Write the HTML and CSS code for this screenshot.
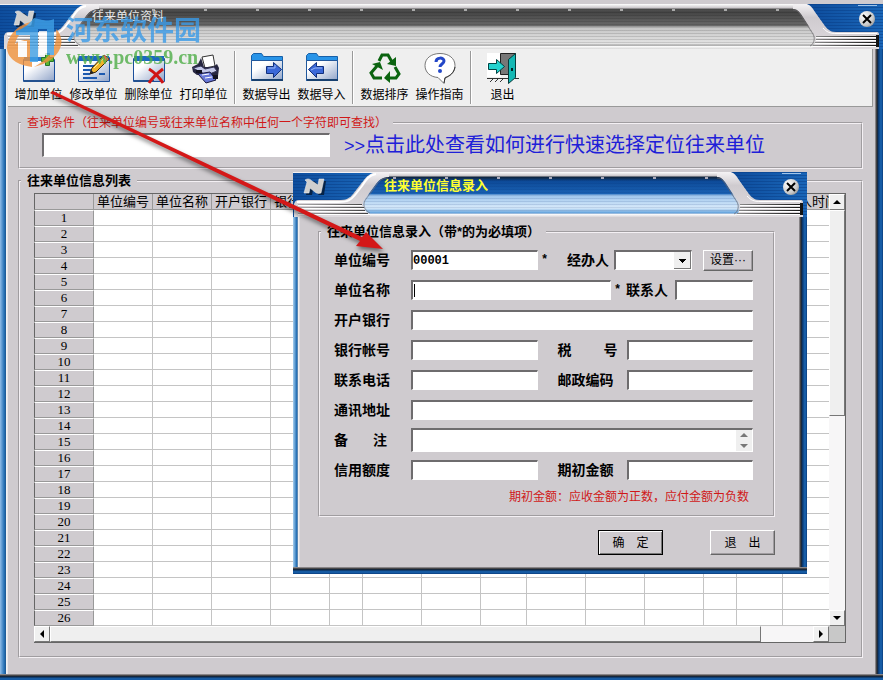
FILE: index.html
```html
<!DOCTYPE html>
<html lang="zh-CN">
<head>
  <meta charset="UTF-8" />
  <meta name="viewport" content="width=device-width, initial-scale=1.0"/>
  <title>往来单位资料</title>
  <link rel="stylesheet" href="styles.css">
</head>
<body>
  <svg class="defs" width="0" height="0" aria-hidden="true">
    <defs>
      <linearGradient id="blueFill" x1="0" y1="0" x2="1" y2="0">
        <stop offset="0" stop-color="#0d4c9c"/>
        <stop offset="1" stop-color="#1a66b8"/>
      </linearGradient>
      <linearGradient id="silverFill" x1="0" y1="0" x2="0" y2="1">
        <stop offset="0" stop-color="#f4f2f4"/>
        <stop offset="0.3" stop-color="#cfcbcf"/>
        <stop offset="1" stop-color="#dedade"/>
      </linearGradient>
      <linearGradient id="stripeLeft" gradientUnits="userSpaceOnUse" x1="0" y1="0" x2="72" y2="0">
        <stop offset="0" stop-color="#b8b6b8"/>
        <stop offset="1" stop-color="#444"/>
      </linearGradient>
      <linearGradient id="stripeRight" gradientUnits="userSpaceOnUse" x1="22" y1="0" x2="86" y2="0">
        <stop offset="0" stop-color="#888"/>
        <stop offset="1" stop-color="#111"/>
      </linearGradient>
      <linearGradient id="folderFill" x1="0" y1="0" x2="1" y2="1">
        <stop offset="0.3" stop-color="#ffffff"/>
        <stop offset="1" stop-color="#8fa3c8"/>
      </linearGradient>
      <pattern id="lines" width="4" height="3" patternUnits="userSpaceOnUse">
        <rect width="4" height="1" fill="#063a80" opacity="0.45"/>
      </pattern>
      <symbol id="capLeft" overflow="visible">
        <path fill="url(#silverFill)" d="M-5 0H96V5C90 5 87 7 83 12L72 27C68 32 70 38 77 42V45H-5Z"/>
        <path fill="none" stroke="#77757a" stroke-width="1" opacity="0.7" d="M95 6C90 6 87 8 84 12L73 27C69 32 71 38 77 41"/>
        <path fill="url(#blueFill)" d="M-5 1H80C74 3 72 7 67 13L60 22C56 27 53 28 44 28H6C3 28 2 29 1 32V45H-5Z"/>
        <path fill="url(#lines)" d="M-5 1H80C74 3 72 7 67 13L60 22C56 27 53 28 44 28H6C3 28 2 29 1 32V45H-5Z"/>
        <path fill="none" stroke="#fff" stroke-width="2" d="M4 30H45C55 30 58 28 62 23L69 14C73 8 76 3 83 2"/>
        <g stroke="#fff"><path d="M5 33.500H69M5 36.500H71M5 39.500H73M5 42.500H77"/></g>
        <g fill="url(#stripeLeft)">
          <rect x="5" y="32" width="64" height="1"/><rect x="5" y="35" width="66" height="1"/>
          <rect x="5" y="38" width="67" height="1"/><rect x="5" y="41" width="70" height="1"/>
        </g>
        <path fill="#062347" d="M15 9h6l6 5 1-5h5l-2 14h-5l-6-5-1 5h-6l2-10z"/>
        <path fill="#cfcfcf" stroke="#f4f4f4" stroke-width="0.500" d="M12 8c3-2 5-1 7 1l6 4 1-6h5l-3 14c-3 1-5 0-6-1l-5-4-1 5h-5l3-11z"/>
      </symbol>
      <symbol id="capRight" overflow="visible">
        <path fill="url(#silverFill)" d="M0 0H90V45H18C22 42 24 34 21 30L8 10C5 6 3 5 0 5Z"/>
        <path fill="none" stroke="#66646a" stroke-width="1" opacity="0.7" d="M0 6C3 6 5 7 7 10L20 30C23 35 20 41 17 42"/>
        <path fill="url(#blueFill)" d="M14 0H90V45H86V31C86 28 85 28 83 28H46C38 28 36 27 32 22L22 8C19 3 17 1 14 0Z"/>
        <path fill="url(#lines)" d="M14 0H90V45H86V31C86 28 85 28 83 28H46C38 28 36 27 32 22L22 8C19 3 17 1 14 0Z"/>
        <path stroke="#9fc4ea" d="M65 1.500H84"/>
        <path fill="none" stroke="#fff" stroke-width="1" d="M30 24C34 28 36 29.500 44 29.500H84"/>
        <path stroke="#fff" d="M23 33.500H85M23 36.500H85M22 39.500H85M20 42.500H85"/>
        <g fill="url(#stripeRight)">
          <rect x="23" y="32" width="62" height="1"/><rect x="23" y="35" width="62" height="1"/>
          <rect x="22" y="38" width="63" height="1"/><rect x="20" y="41" width="65" height="1"/>
          <rect x="83" y="31" width="3" height="12"/>
        </g>
      </symbol>
    </defs>
  </svg>

  <main class="window">
    <header class="titlebar titlebar-gray">
      <svg class="cap" width="99" height="45" viewBox="-3 0 99 45"><use href="#capLeft"/></svg>
      <h1 class="title">往来单位资料</h1>
      <svg class="cap" width="90" height="45" viewBox="0 0 90 45"><use href="#capRight"/></svg>
      <button class="close" aria-label="关闭"><svg width="16" height="16" viewBox="0 0 16 16"><path d="M4 4l8 8M12 4l-8 8" stroke="#000" stroke-width="2"/></svg></button>
    </header>

    <nav class="toolbar">
      <button class="tool">
        <svg width="32" height="32" viewBox="0 0 32 32">
          <path fill="url(#folderFill)" stroke="#1b4f9c" d="M.5 6.500h31v22h-31z"/><path fill="#2a7ad0" d="M1 4h18v4H1z"/><path fill="#23518f" d="M1 27h31v2H1z"/>
          <path fill="#5cb531" stroke="#24752a" d="M22.500.5h4v4h4v4h-4v4h-4v-4h-4v-4h4z"/>
        </svg>
        <span>增加单位</span>
      </button>
      <button class="tool">
        <svg width="32" height="32" viewBox="0 0 32 32">
          <path fill="url(#folderFill)" stroke="#1b4f9c" d="M.5 4.500h31v24h-31z"/><path fill="#1c68c4" d="M1 3h30v5H1z"/>
          <path stroke="#1d5ab0" stroke-width="2" d="M5 13h12M5 17h9M5 21h7M5 25h14M21 21h6"/>
          <path fill="#f0b429" stroke="#3c2708" d="M12 21l2-6L26 2l5 4-13 13z"/><path fill="#222" d="M12 21l1-4 3 3z"/><path fill="#e06c4c" d="M26 2l5 4-2 2-5-4z"/><path stroke="#fff1a0" d="M16 15L26 5"/>
        </svg>
        <span>修改单位</span>
      </button>
      <button class="tool">
        <svg width="32" height="32" viewBox="0 0 32 32">
          <path fill="url(#folderFill)" stroke="#1b4f9c" d="M.5 5.500h31v23h-31z"/><path fill="#1c68c4" d="M1 3h30v5H1z"/><path fill="#23518f" d="M1 27h20v2H1z"/>
          <path stroke="#d01414" stroke-width="3" fill="none" d="M16 16c5 3 10 8 14 14M30 16c-4 3-10 8-14 14"/>
        </svg>
        <span>删除单位</span>
      </button>
      <button class="tool">
        <svg width="32" height="32" viewBox="0 0 32 32">
          <path fill="#fff" stroke="#333" d="M14 4l11-2 2 11-10 2z"/>
          <path fill="#262640" d="M4 14l6-3 3-6 3 9h9l4-3 2 4-1 8-5 3-8-5-8 1-4-3z"/>
          <path fill="#c3c8e8" stroke="#333355" d="M5 15l8-2 4 3 9-2 3 4-10 4-7-3z"/>
          <path fill="#6878d8" stroke="#171740" d="M10 21l12-2 6 8-10 3z"/>
          <path stroke="#fff" d="M14 22l7-1M17 25l7-1"/><path fill="#11111f" d="M8 17h6v3H8zM25 22h5v4h-5z"/>
        </svg>
        <span>打印单位</span>
      </button>
      <span class="separator"></span>
      <button class="tool">
        <svg width="32" height="32" viewBox="0 0 32 32">
          <path fill="#2894e8" stroke="#1760a8" d="M.5 28V2.500l2-2h8l2 3h19V9H.5z"/><path fill="url(#folderFill)" stroke="#21589c" d="M.5 7.500h31v20H.5z"/><path fill="#17406f" d="M1 26h31v2H1z"/>
          <path fill="#3b68d8" stroke="#102f7c" d="M15.500 13.500h7v-4l8 7-8 8v-4h-7z"/><path stroke="#9db9f4" fill="none" d="M17 15h7v-3"/>
        </svg>
        <span>数据导出</span>
      </button>
      <button class="tool">
        <svg width="32" height="32" viewBox="0 0 32 32">
          <path fill="#2894e8" stroke="#1760a8" d="M.5 28V2.500l2-2h8l2 3h19V9H.5z"/><path fill="url(#folderFill)" stroke="#21589c" d="M.5 7.500h31v20H.5z"/><path fill="#17406f" d="M1 26h31v2H1z"/>
          <path fill="#3b68d8" stroke="#102f7c" d="M17.500 13.500h-7v-4l-8 7 8 8v-4h7z"/><path stroke="#9db9f4" fill="none" d="M16 15H9l-4 2"/>
        </svg>
        <span>数据导入</span>
      </button>
      <span class="separator"></span>
      <button class="tool">
        <svg width="32" height="32" viewBox="0 0 32 32">
          <g fill="none" stroke="#0b6410" stroke-width="3">
            <path d="M10 8l3-6h6l4 7"/>
            <path d="M8 13L2 20l3 5h8"/>
            <path d="M26 14l4 7-3 4h-7"/>
          </g>
          <g fill="#0b6410">
            <path d="M27 4v9l-9-2z"/>
            <path d="M3 11l8-2 3 8z"/>
            <path d="M21 18v12l-6-5z"/>
          </g>
        </svg>
        <span>数据排序</span>
      </button>
      <button class="tool">
        <svg width="32" height="32" viewBox="0 0 32 32">
          <path fill="#fff" stroke="#777" d="M16 .5c9 0 15 5 15 12 0 6-4 10-10 12l-1 6-6-6C6 24 1 19 1 12.500 1 5.500 7 .5 16 .5z"/>
          <path stroke="#333" fill="none" d="M31 14c-1 6-5 9-10 11l-1 5"/>
          <path fill="none" stroke="#2347c8" stroke-width="3" d="M12 9c0-5 8-5 8-1 0 3-4 3-4 6"/><circle cx="16" cy="18" r="2" fill="#2347c8"/>
        </svg>
        <span>操作指南</span>
      </button>
      <span class="separator"></span>
      <button class="tool">
        <svg width="32" height="32" viewBox="0 0 32 32">
          <path fill="#fff" d="M0 0h14v24H0z"/><path fill="#777" stroke="#222" d="M13.500.5h15v21h-15z"/>
          <path fill="#14b8b4" stroke="#063c3c" d="M21.500 6.500l7-6v24l-7 6z"/><path fill="#022" d="M24 15h2v3h-2z"/>
          <path fill="#24d4d0" stroke="#044" d="M1.500 10.500h8v-4l8 7-8 7v-4h-8z"/>
          <path stroke="#333" d="M0 25.500h21M28 25.500h4M3 29l3-3M8 29l3-3M13 29l3-3"/>
        </svg>
        <span>退出</span>
      </button>
    </nav>

    <fieldset class="group query">
      <legend><label for="keyword">查询条件（往来单位编号或往来单位名称中任何一个字符即可查找）</label></legend>
      <div class="query-row">
        <input class="field keyword" id="keyword" type="text">
        <a class="help-link" href="#"><span>&gt;&gt;</span>点击此处查看如何进行快速选择定位往来单位</a>
      </div>
    </fieldset>

    <fieldset class="group list">
      <legend>往来单位信息列表</legend>
      <div class="grid">
        <div class="grid-view">
          <table>
            <colgroup>
              <col class="c-head"><col class="c-l"><col class="c-l"><col class="c-l"><col class="c-l"><col class="c-s"><col class="c-l"><col class="c-l">
              <col class="c-m"><col class="c-l"><col class="c-l"><col class="c-l"><col class="c-s"><col class="c-m"><col class="c-l">
            </colgroup>
            <thead>
              <tr><th></th><th>单位编号</th><th>单位名称</th><th>开户银行</th><th>银行帐号</th><th></th><th></th><th></th><th></th><th></th><th></th><th></th><th></th><th></th><th>录入时间</th></tr>
            </thead>
            <tbody id="rows"></tbody>
          </table>
        </div>
        <div class="scroll scroll-v">
          <button class="scroll-btn" aria-label="向上"><i class="tri up"></i></button>
          <div class="thumb"></div>
          <div class="track"></div>
          <button class="scroll-btn" aria-label="向下"><i class="tri down"></i></button>
        </div>
        <div class="scroll scroll-h">
          <button class="scroll-btn" aria-label="向左"><i class="tri left"></i></button>
          <div class="thumb"></div>
          <div class="track"></div>
          <button class="scroll-btn" aria-label="向右"><i class="tri right"></i></button>
        </div>
        <div class="corner"></div>
      </div>
    </fieldset>
  </main>

  <section class="dialog" role="dialog" aria-labelledby="dialogTitle">
    <header class="titlebar titlebar-blue">
      <svg class="cap" width="96" height="45" viewBox="0 0 96 45"><use href="#capLeft"/></svg>
      <h2 class="title" id="dialogTitle">往来单位信息录入</h2>
      <svg class="cap" width="90" height="45" viewBox="0 0 90 45"><use href="#capRight"/></svg>
      <button class="close" aria-label="关闭"><svg width="16" height="16" viewBox="0 0 16 16"><path d="M4 4l8 8M12 4l-8 8" stroke="#000" stroke-width="2"/></svg></button>
    </header>
    <form class="dialog-body">
      <fieldset class="group entry">
        <legend>往来单位信息录入（带*的为必填项）</legend>
        <div class="row">
          <label for="code">单位编号</label>
          <input class="field half" id="code" type="text" value="00001">
          <span class="star">*</span>
          <label class="agent-label" for="agent">经办人</label>
          <select class="field agent" id="agent"><option></option></select>
          <button class="btn btn-set" type="button">设置···</button>
        </div>
        <div class="row">
          <label for="name">单位名称</label>
          <span class="caret-box"><input class="field" id="name" type="text"></span>
          <span class="star">*</span>
          <label class="contact-label" for="contact">联系人</label>
          <input class="field contact" id="contact" type="text">
        </div>
        <div class="row">
          <label for="bank">开户银行</label>
          <input class="field wide" id="bank" type="text">
        </div>
        <div class="row">
          <label for="account">银行帐号</label>
          <input class="field half" id="account" type="text">
          <label class="second spread" for="tax"><span>税</span><span>号</span></label>
          <input class="field half" id="tax" type="text">
        </div>
        <div class="row">
          <label for="phone">联系电话</label>
          <input class="field half" id="phone" type="text">
          <label class="second" for="zip">邮政编码</label>
          <input class="field half" id="zip" type="text">
        </div>
        <div class="row">
          <label for="address">通讯地址</label>
          <input class="field wide" id="address" type="text">
        </div>
        <div class="row">
          <label class="spread" for="memo"><span>备</span><span>注</span></label>
          <div class="field memo">
            <textarea id="memo" rows="1"></textarea>
            <div class="memo-scroll"><i class="tri up"></i><i class="tri down"></i></div>
          </div>
        </div>
        <div class="row">
          <label for="credit">信用额度</label>
          <input class="field half" id="credit" type="text">
          <label class="second" for="opening">期初金额</label>
          <input class="field half" id="opening" type="text">
        </div>
        <p class="note">期初金额：应收金额为正数，应付金额为负数</p>
      </fieldset>
      <div class="actions">
        <button class="btn btn-main default" type="button"><span>确</span><span>定</span></button>
        <button class="btn btn-main" type="button"><span>退</span><span>出</span></button>
      </div>
    </form>
  </section>

  <div class="watermark">
    <svg width="60" height="52" viewBox="0 0 60 52">
      <path fill="#f0923c" d="M1 30C3 14 18 2 40 4C24 6 12 14 9 27C17 22 22 22 26 24V50C12 48 1 42 1 30z"/>
      <path fill="#f0923c" d="M50 12C62 24 54 44 28 50C42 42 52 32 50 12z"/>
      <path fill="#3fa0e6" d="M10 14C18 12 24 6 28 1C38 3 40 5 48 2V38H41V12H32V45H24V18H10z"/>
      <path fill="#fff" d="M12 24h9v16h-9zM33 14h8v24h-8z"/>
    </svg>
    <div class="watermark-text">
      <strong>河东软件园</strong>
      <em>www.pc0359.cn</em>
    </div>
  </div>

  <svg class="arrow" width="350" height="180" viewBox="0 0 350 180" aria-hidden="true">
    <path fill="#d41818" d="M10 4L13 2L322 148L326 143L343 160L316 157L320 152Z"/>
  </svg>

  <script>
    const tbody = document.getElementById("rows");
    const columns = 14;

    for (let i = 1; i <= 26; i++) {
      const row = document.createElement("tr");
      const head = document.createElement("th");
      head.textContent = i;
      row.appendChild(head);
      for (let c = 0; c < columns; c++) {
        row.appendChild(document.createElement("td"));
      }
      tbody.appendChild(row);
    }
  </script>
</body>
</html>
```
FILE: styles.css
```css
* {
  box-sizing: border-box;
}

body {
  margin: 0;
  position: relative;
  font-family: "Liberation Sans", "Noto Sans CJK SC", sans-serif;
  font-size: 12px;
  line-height: 16px;
  color: #000;
  background: #cfcbcf;
}

button, input, select, textarea {
  font: inherit;
  color: inherit;
}

.defs {
  position: absolute;
}

/* window frame */
.window {
  position: relative;
  min-height: 100vh;
  padding: 4px 0 0 0;
  display: flex;
  flex-direction: column;
  background:
    linear-gradient(#cfcbcf, #cfcbcf) top / 100% 4px no-repeat,
    linear-gradient(to bottom, #a8a4a8, #222 30%, #0a2a50 40%, #1a66b4 70%, #0b3d7c) bottom / 100% 7px no-repeat,
    linear-gradient(to right, #8fbce8, #2a74b8 50%, #1d5b98 70%, #f4f4f4 80%, #e4e0e4) left / 8px 100% no-repeat,
    linear-gradient(to right, #a8a4a8, #222 25%, #0a3468 40%, #1a66b4 75%, #0b3d7c) right / 8px 100% no-repeat,
    #cfcbcf;
}

.titlebar {
  position: relative;
  display: flex;
  justify-content: space-between;
  height: 45px;
}

.titlebar-gray {
  background:
    repeating-linear-gradient(to right, transparent 0 48px, #aaa 48px 51px, transparent 51px 52px) 0 5px / 100% 2px no-repeat,
    repeating-linear-gradient(to bottom, rgba(0, 0, 0, 0.12) 0 1px, transparent 1px 3px) 0 5px / 100% 37px no-repeat,
    linear-gradient(to bottom, #fff 0, #c8c4c8 4px, #555 5px, #444 8px, #6a6a6a 22px, #c4c4c4 23px, #e4e4e4 40px, #999 41px, #fff 42px, #d8d8d8 45px);
}

.titlebar-blue {
  background:
    repeating-linear-gradient(to right, transparent 0 48px, #aab 48px 51px, transparent 51px 52px) 0 5px / 100% 2px no-repeat,
    repeating-linear-gradient(to bottom, rgba(0, 40, 110, 0.12) 0 1px, transparent 1px 3px) 0 5px / 100% 37px no-repeat,
    linear-gradient(to bottom, #fff 0, #c8c4c8 4px, #123 5px, #0d4a98 9px, #1a62b4 22px, #9cc4ec 23px, #d8eafa 36px, #5fa0dc 41px, #fff 42px, #d8d4d8 45px);
}

.title {
  position: absolute;
  left: 92px;
  top: 5px;
  margin: 0;
  font-size: 12px;
  font-weight: normal;
  color: #e8e8e8;
}

.titlebar-blue .title {
  left: 91px;
  top: 6px;
  font-size: 13px;
  font-weight: bold;
  color: #ffff30;
}

.close {
  position: absolute;
  right: 8px;
  top: 7px;
  width: 16px;
  height: 16px;
  padding: 0;
  border: none;
  border-radius: 50%;
  background: radial-gradient(circle at 5px 5px, #fff, #c8c8c8 60%, #666);
}

.close svg {
  display: block;
}

/* toolbar */
.toolbar {
  display: flex;
  height: 58px;
  margin: 0 10px 0 8px;
  padding: 4px 3px 0;
  background: #efefef;
  border-right: 1px solid #999;
  border-bottom: 1px solid #999;
}

.tool {
  width: 55px;
  padding: 0;
  border: none;
  background: none;
  white-space: nowrap;
  display: flex;
  flex-direction: column;
  align-items: center;
}

.tool span {
  margin: 2px -2px 0;
}

.separator {
  width: 2px;
  margin: -2px 3px 2px;
  border-left: 1px solid #999;
  border-right: 1px solid #fff;
}

/* groups */
.group {
  min-width: 0;
  margin: 0;
  border: 2px groove #f4f0f4;
}

.group legend {
  padding: 0 6px;
  font-size: 13px;
  font-weight: bold;
}

.query {
  margin: 8px 20px 0 18px;
  padding: 2px 22px 10px;
}

.query legend {
  margin-left: -21px;
  font-size: 12px;
  font-weight: normal;
  color: #d01818;
}

.query-row {
  display: flex;
  align-items: center;
  gap: 14px;
  height: 24px;
}

.field {
  height: 20px;
  min-width: 0;
  padding: 0 2px;
  border: 1px solid;
  border-width: 2px 1px 1px 2px;
  border-color: #6e6c6e #fff #fff #6e6c6e;
  border-radius: 0;
  outline: none;
  background: #fff;
}

.keyword {
  width: 288px;
  height: 24px;
}

.help-link {
  font-size: 20px;
  line-height: 24px;
  color: #2020d8;
  text-decoration: none;
  white-space: nowrap;
}

.help-link span {
  font-size: 18px;
}

.list {
  flex: 1;
  margin: 4px 20px 23px 18px;
  padding: 4px 15px 13px 14px;
}

.list legend {
  margin-left: -13px;
}

.grid {
  display: grid;
  grid-template-columns: 1fr 16px;
  grid-template-rows: auto 16px;
  border: 1px solid #666;
  border-left: none;
}

.grid-view {
  overflow: hidden;
  background: #fff;
}

table {
  width: 808px;
  table-layout: fixed;
  border-collapse: separate;
  border-spacing: 0;
}

.c-head { width: 60px; }
.c-l { width: 59px; }
.c-m { width: 46px; }
.c-s { width: 33px; }

th, td {
  height: 16px;
  padding: 0;
  border-right: 1px solid #c4c4c4;
  border-bottom: 1px solid #c4c4c4;
}

th {
  overflow: hidden;
  font-size: 13px;
  line-height: 15px;
  font-weight: normal;
  white-space: nowrap;
  background: #cfcbcf;
  border-color: #999;
}

th:first-child {
  border-left: 1px solid #666;
}

tbody th {
  font-family: "Liberation Serif", serif;
  border-top: 1px solid #fff;
  line-height: 14px;
}

/* scroll bars */
.scroll {
  display: flex;
  background: #f7f6f7;
}

.scroll-v {
  flex-direction: column;
}

.scroll-btn {
  width: 16px;
  height: 16px;
  flex: none;
  display: flex;
  align-items: center;
  justify-content: center;
  padding: 0;
  background: #f0f0f0;
  border: 1px solid;
  border-color: #fff #777 #777 #fff;
}

.thumb {
  background: #efefef;
  border: 1px solid;
  border-color: #fff #777 #777 #fff;
}

.scroll-v .thumb {
  flex: 205;
}

.scroll-v .track {
  flex: 195;
}

.scroll-h .thumb {
  flex: 712;
}

.scroll-h .track {
  flex: 52;
}

.corner {
  background: #c8c8c8;
}

.tri {
  width: 0;
  height: 0;
  border: 4px solid transparent;
}

.up { border-top-width: 0; border-bottom-color: #000; }
.down { border-bottom-width: 0; border-top-color: #000; }
.left { border-left-width: 0; border-right-color: #000; }
.right { border-right-width: 0; border-left-color: #000; }

/* dialog */
.dialog {
  position: absolute;
  left: 293px;
  top: 172px;
  width: 514px;
  padding-bottom: 7px;
  background:
    linear-gradient(to bottom, #a8a4a8, #222 30%, #0a2a50 40%, #1a66b4 70%, #0b3d7c) bottom / 100% 7px no-repeat,
    linear-gradient(to right, #a8d0f0, #2a74b8 50%, #1d5b98 60%, #f4f4f4 75%, #d8d4d8) left / 7px 100% no-repeat,
    linear-gradient(to right, #a8a4a8, #222 25%, #0a3468 40%, #1a66b4 75%, #0b3d7c) right / 8px 100% no-repeat,
    #cfcbcf;
}

.dialog-body {
  padding: 7px 32px 12px 25px;
}

.entry {
  padding: 5px 20px 6px 14px;
}

.entry legend {
  margin-left: -13px;
}

.row {
  display: flex;
  align-items: center;
  height: 30px;
}

.row label {
  flex: none;
  width: 77px;
  font-size: 14px;
  font-weight: bold;
}

.row .spread {
  display: flex;
  justify-content: space-between;
  padding-right: 24px;
}

.row .second {
  width: 69px;
  margin-left: 20px;
}

.row .second.spread {
  padding-right: 9px;
}

.half {
  flex: 1;
}

#code {
  flex: none;
  width: 127px;
  padding: 0;
  font-family: "Liberation Mono", monospace;
  font-weight: bold;
}

.star {
  width: 15px;
  padding-left: 3px;
  font-family: "Liberation Mono", monospace;
  font-weight: bold;
}

.row .agent-label {
  width: 47px;
  margin-left: 14px;
}

/* drop-down arrow is stacked from one-pixel bars */
.agent {
  width: 78px;
  appearance: none;
  background:
    linear-gradient(#000, #000) right 5px top 7px / 7px 1px no-repeat,
    linear-gradient(#000, #000) right 6px top 8px / 5px 1px no-repeat,
    linear-gradient(#000, #000) right 7px top 9px / 3px 1px no-repeat,
    linear-gradient(#000, #000) right 8px top 10px / 1px 1px no-repeat,
    linear-gradient(#777, #777) right / 1px 100% no-repeat,
    linear-gradient(#777, #777) right bottom / 17px 1px no-repeat,
    linear-gradient(#efefef, #efefef) right / 17px 100% no-repeat,
    #fff;
}

.caret-box {
  position: relative;
  flex: 1;
  display: flex;
}

.caret-box .field {
  width: 100%;
}

.caret-box::after {
  content: "";
  position: absolute;
  left: 3px;
  top: 4px;
  width: 1px;
  height: 13px;
  background: #000;
}

.row .contact-label {
  width: 49px;
}

.contact {
  width: 78px;
}

.wide {
  flex: 1;
}

.memo {
  flex: 1;
  display: flex;
  height: 24px;
  padding: 0;
}

.memo textarea {
  flex: 1;
  min-width: 0;
  padding: 0 2px;
  border: none;
  outline: none;
  resize: none;
  overflow: hidden;
}

.memo-scroll {
  width: 16px;
  display: flex;
  flex-direction: column;
  align-items: center;
  justify-content: space-around;
  background: #efefef;
}

.memo-scroll .up { border-bottom-color: #777; }
.memo-scroll .down { border-top-color: #777; }

.note {
  margin: 0;
  padding-right: 4px;
  line-height: 24px;
  text-align: right;
  color: #d01818;
}

.btn {
  padding: 0;
  background: #cfcbcf;
  border: 1px solid;
  border-color: #fff #666 #666 #fff;
  box-shadow: inset -1px -1px 0 #a09ca0;
}

.btn-set {
  width: 50px;
  height: 21px;
  margin-left: auto;
}

.actions {
  display: flex;
  justify-content: flex-end;
  gap: 47px;
  margin-top: 13px;
}

.btn-main {
  display: flex;
  align-items: center;
  justify-content: center;
  gap: 12px;
  width: 65px;
  height: 25px;
}

.default {
  border-color: #000;
  box-shadow: inset 1px 1px 0 #fff, inset -1px -1px 0 #777;
}

/* overlays */
.watermark {
  position: absolute;
  left: 6px;
  top: 17px;
  display: flex;
  opacity: 0.8;
  pointer-events: none;
}

.watermark-text {
  display: flex;
  flex-direction: column;
  white-space: nowrap;
}

.watermark strong {
  font-size: 27px;
  line-height: 28px;
  color: #3a9be8;
}

.watermark em {
  font-family: "Liberation Serif", serif;
  font-size: 20px;
  line-height: 24px;
  font-style: normal;
  font-weight: bold;
  color: #4fae48;
}

.arrow {
  position: absolute;
  left: 40px;
  top: 89px;
  filter: drop-shadow(1px 3px 2px rgba(0, 0, 0, 0.5));
  pointer-events: none;
}
```
